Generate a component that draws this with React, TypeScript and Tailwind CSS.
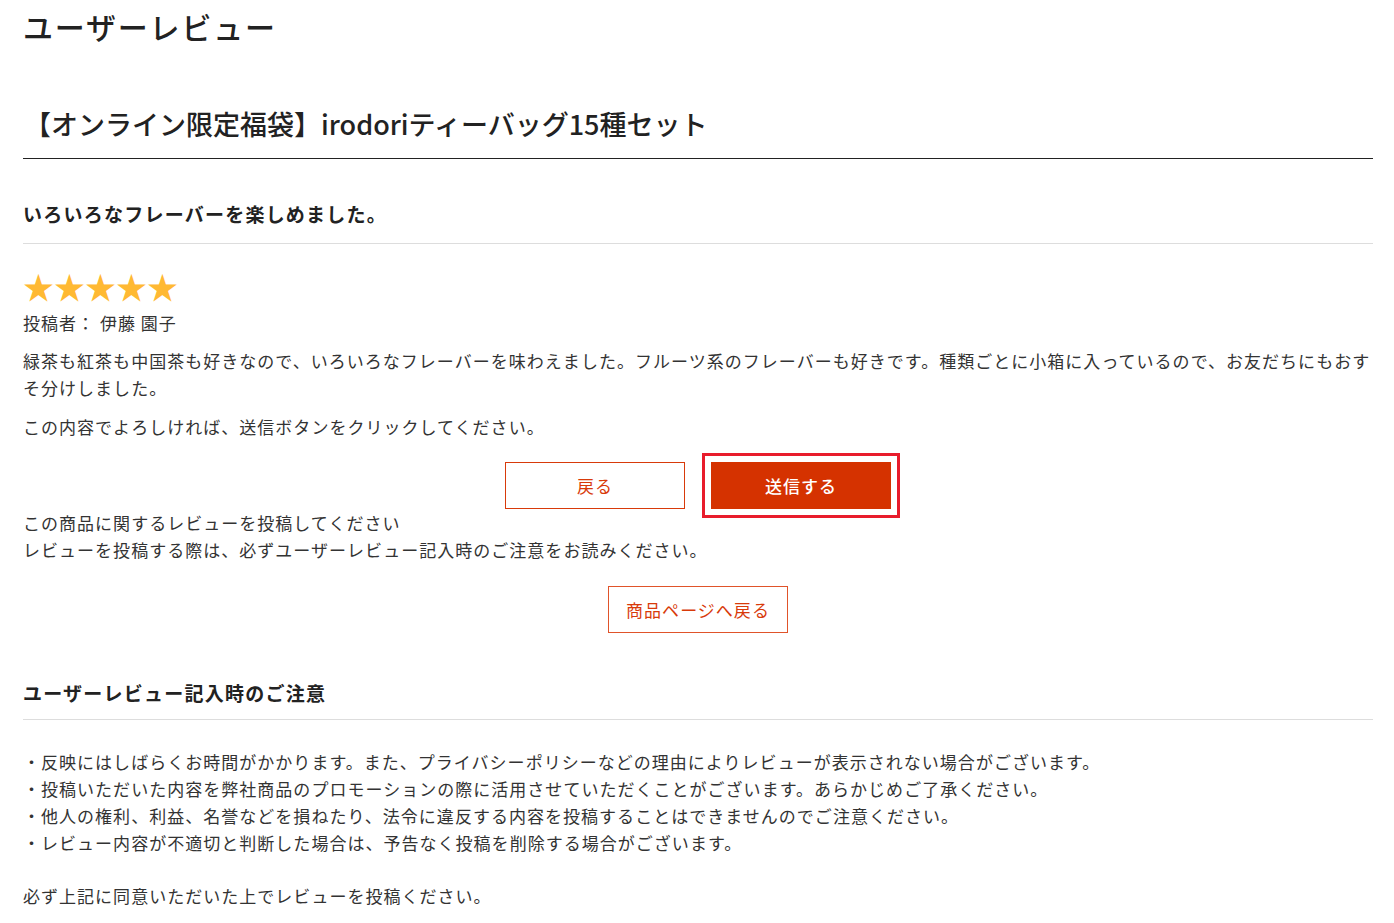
import React from "react";

const font = { fontFamily: '"Noto Sans CJK JP", "Noto Sans", sans-serif' };

export default function App() {
  return (
    <div className="bg-white text-[#333] min-h-[923px]" style={font}>
      <div className="ml-[23px] w-[1350px] tracking-[0.064em]">
        <h1 className="text-[30px] leading-[40px] pt-[6px] font-medium tracking-[0.06em] text-[#222]">ユーザーレビュー</h1>

        <div className="mt-[58px] border-b border-[#222] pb-[14px]">
          <h2 className="text-[27px] leading-[40px] font-medium tracking-normal pl-[1px] text-[#222]">
            【オンライン限定福袋】irodoriティーバッグ15種セット
          </h2>
        </div>

        <div className="mt-[42px] border-b border-[#ddd] pb-[16px]">
          <h3 className="text-[19px] leading-[26px] font-bold tracking-[0.065em] text-[#222]">いろいろなフレーバーを楽しめました。</h3>
        </div>

        <div className="mt-[23px] text-[31px] leading-[38px] text-[#ffb933] tracking-normal">★★★★★</div>
        <p className="text-[17px] leading-[27px] mt-[4px]">投稿者： 伊藤 園子</p>
        <p className="text-[17px] leading-[27px] mt-[11px]">
          緑茶も紅茶も中国茶も好きなので、いろいろなフレーバーを味わえました。フルーツ系のフレーバーも好きです。種類ごとに小箱に入っているので、お友だちにもおすそ分けしました。
        </p>
        <p className="text-[17px] leading-[27px] mt-[12px]">この内容でよろしければ、送信ボタンをクリックしてください。</p>

        <div className="flex justify-center gap-[26px] mt-[22px]">
          <button className="w-[180px] h-[47px] border border-[#d83a0a] text-[#d83a0a] text-[17px] bg-white">戻る</button>
          <button className="w-[180px] h-[47px] bg-[#d53200] text-white text-[17px] font-medium outline-[3px] outline-solid outline-[#e81c2c] outline-offset-[6px]">送信する</button>
        </div>

        <p className="text-[17px] leading-[27px] mt-[0px]">
          この商品に関するレビューを投稿してください
          <br />
          レビューを投稿する際は、必ずユーザーレビュー記入時のご注意をお読みください。
        </p>

        <div className="flex justify-center mt-[23px]">
          <button className="w-[180px] h-[47px] border border-[#e0532a] text-[#d83a0a] text-[17px] bg-white">商品ページへ戻る</button>
        </div>

        <div className="mt-[47px] border-b border-[#ddd] pb-[13px]">
          <h3 className="text-[19px] leading-[26px] font-bold tracking-[0.065em] text-[#222]">ユーザーレビュー記入時のご注意</h3>
        </div>

        <ul className="text-[17px] leading-[27px] mt-[28px]">
          <li>・反映にはしばらくお時間がかかります。また、プライバシーポリシーなどの理由によりレビューが表示されない場合がございます。</li>
          <li>・投稿いただいた内容を弊社商品のプロモーションの際に活用させていただくことがございます。あらかじめご了承ください。</li>
          <li>・他人の権利、利益、名誉などを損ねたり、法令に違反する内容を投稿することはできませんのでご注意ください。</li>
          <li>・レビュー内容が不適切と判断した場合は、予告なく投稿を削除する場合がございます。</li>
        </ul>

        <p className="text-[17px] leading-[27px] mt-[26px]">必ず上記に同意いただいた上でレビューを投稿ください。</p>
      </div>
    </div>
  );
}
